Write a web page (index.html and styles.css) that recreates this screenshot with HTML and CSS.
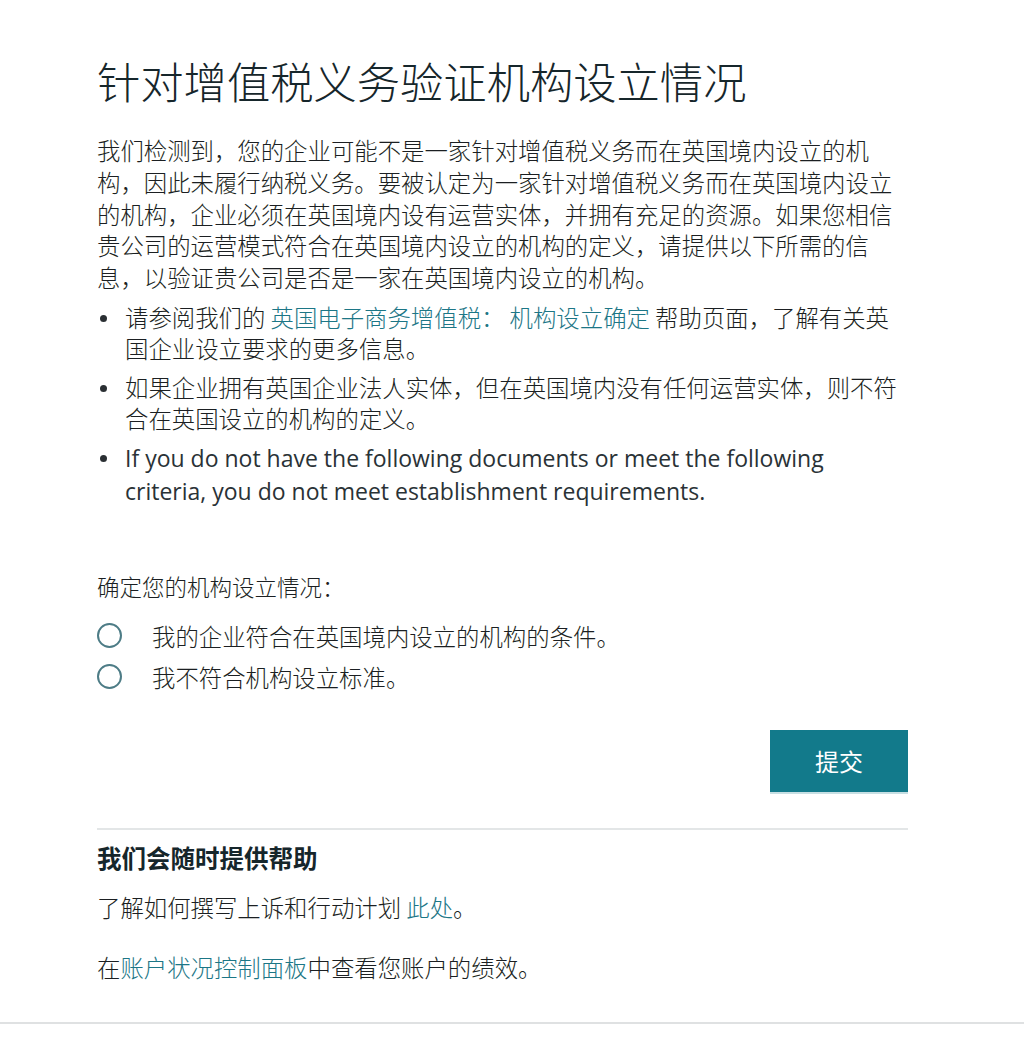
FILE: index.html
```html
<!DOCTYPE html>
<html lang="zh-CN">
<head>
<meta charset="utf-8">
<link rel="stylesheet" href="styles.css">
</head>
<body>
<div class="page">
  <main class="content">
    <h1 class="title">针对增值税义务验证机构设立情况</h1>
    <p class="intro">我们检测到，您的企业可能不是一家针对增值税义务而在英国境内设立的机构，因此未履行纳税义务。要被认定为一家针对增值税义务而在英国境内设立的机构，企业必须在英国境内设有运营实体，并拥有充足的资源。如果您相信贵公司的运营模式符合在英国境内设立的机构的定义，请提供以下所需的信息，以验证贵公司是否是一家在英国境内设立的机构。</p>
    <ul class="bullets">
      <li>请参阅我们的 <a class="link" href="#">英国电子商务增值税： 机构设立确定</a> <span>帮助页面，了解有关英</span><span>国企业设立要求的更多信息。</span></li>
      <li>如果企业拥有英国企业法人实体，但在英国境内没有任何运营实体，则不符合在英国设立的机构的定义。</li>
      <li class="en">If you do not have the following documents or meet the following criteria, you do not meet establishment requirements.</li>
    </ul>
    <div class="form">
      <div class="form-label">确定您的机构设立情况：</div>
      <label class="radio-row"><span class="radio"></span><span>我的企业符合在英国境内设立的机构的条件。</span></label>
      <label class="radio-row"><span class="radio"></span><span>我不符合机构设立标准。</span></label>
      <div class="actions"><button class="submit">提交</button></div>
    </div>
    <section class="help">
      <h2 class="help-title">我们会随时提供帮助</h2>
      <p class="help-text">了解如何撰写上诉和行动计划 <a class="link" href="#">此处</a>。</p>
      <p class="help-text second">在<a class="link" href="#">账户状况控制面板</a>中查看您账户的绩效。</p>
    </section>
  </main>
  <div class="bottom-rule"></div>
</div>
</body>
</html>
```
FILE: styles.css
```css
html, body {
  margin: 0;
  padding: 0;
  background: #ffffff;
}
body {
  font-family: "Noto Sans CJK SC", "Noto Sans", sans-serif;
  color: #1b1f22;
}
.page {
  width: 1024px;
  height: 1052px;
  display: flex;
  flex-direction: column;
}
.content {
  width: 811px;
  margin-left: 97px;
  padding-top: 51px;
}
.title {
  margin: 0;
  font-size: 43.3px;
  font-weight: 300;
  line-height: 58px;
  color: #16262b;
  letter-spacing: 0;
}
.intro {
  margin: 26px 0 0 0;
  font-size: 23.4px;
  font-weight: 300;
  line-height: 31.8px;
}
.bullets {
  margin: 8px 0 0 0;
  padding: 0 0 0 28px;
  list-style: none;
}
.bullets li {
  position: relative;
  font-size: 23.4px;
  font-weight: 300;
  line-height: 31px;
  margin-bottom: 8px;
}
.bullets li::before {
  content: "";
  position: absolute;
  left: -25px;
  top: 13px;
  width: 7px;
  height: 7px;
  border-radius: 50%;
  background: #2a2f33;
}
.bullets li.en {
  font-family: "Open Sans", "Noto Sans", sans-serif;
  font-size: 23px;
  font-weight: 400;
  line-height: 33px;
  color: #2a3236;
}
.link {
  color: #1c7686;
  text-decoration: none;
}
.form {
  margin-top: 62px;
}
.form-label {
  font-size: 22.5px;
  font-weight: 300;
  line-height: 32px;
}
.radio-row {
  display: flex;
  align-items: center;
  gap: 30px;
  font-size: 23.4px;
  font-weight: 300;
  line-height: 32px;
  margin-top: 18px;
}
.radio-row + .radio-row {
  margin-top: 9px;
}
.radio {
  width: 21px;
  height: 21px;
  border: 2px solid #4d7c86;
  border-radius: 50%;
  flex: none;
}
.actions {
  display: flex;
  justify-content: flex-end;
  margin-top: 37px;
}
.submit {
  width: 138px;
  height: 62px;
  border: none;
  background: #127a8b;
  color: #ffffff;
  font-family: "Noto Sans CJK SC", sans-serif;
  font-size: 24px;
  box-shadow: 0 2px 0 #c7dfe3;
}
.help {
  margin-top: 36px;
  border-top: 2px solid #e3e6e7;
  padding-top: 11px;
}
.help-title {
  margin: 0;
  font-size: 24.5px;
  font-weight: 700;
  line-height: 34px;
  color: #16262b;
}
.help-text {
  margin: 16px 0 0 0;
  font-size: 23.4px;
  font-weight: 300;
  line-height: 32px;
}
.help-text.second {
  margin-top: 28px;
}
.bottom-rule {
  margin-top: auto;
  margin-bottom: 28px;
  height: 2px;
  background: #dfe1e2;
}
```
